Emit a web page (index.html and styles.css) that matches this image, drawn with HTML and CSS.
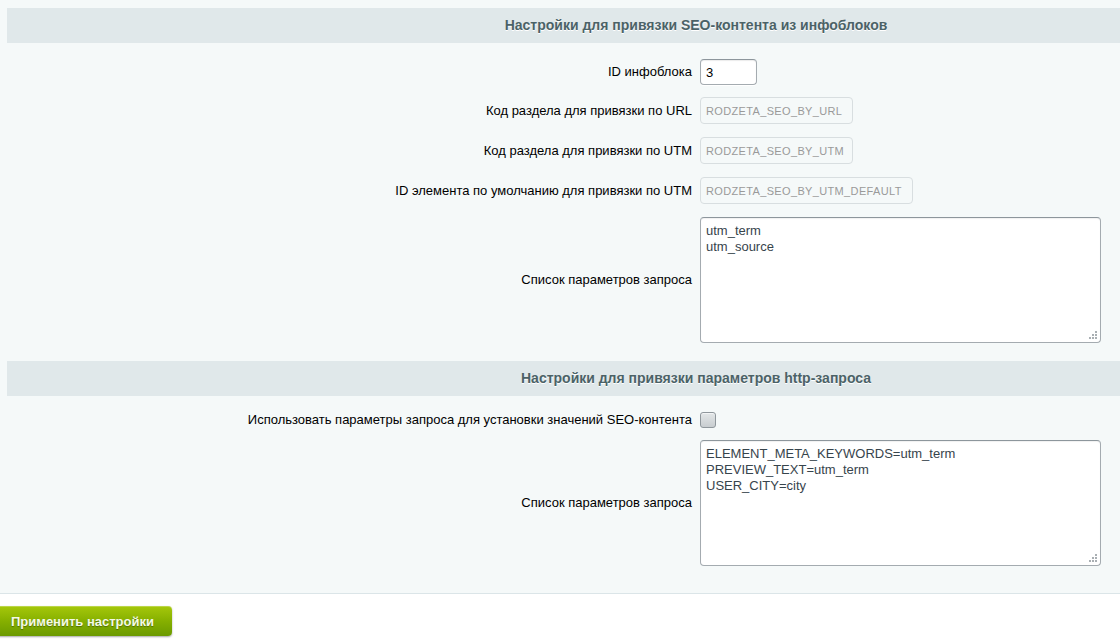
FILE: index.html
```html
<!DOCTYPE html>
<html lang="ru">
<head>
<meta charset="utf-8">
<title>Настройки</title>
<link rel="stylesheet" href="styles.css">
</head>
<body>
<div class="page">
  <div class="content">
    <div class="sheet">
      <section class="group">
        <div class="group-head">Настройки для привязки SEO-контента из инфоблоков</div>
        <div class="group-body">
          <div class="row row-first">
            <div class="label">ID инфоблока</div>
            <div class="field"><input class="text-input id-input" type="text" value="3"></div>
          </div>
          <div class="row">
            <div class="label">Код раздела для привязки по URL</div>
            <div class="field"><input class="text-input ro-input w-short" type="text" value="RODZETA_SEO_BY_URL" disabled></div>
          </div>
          <div class="row">
            <div class="label">Код раздела для привязки по UTM</div>
            <div class="field"><input class="text-input ro-input w-short" type="text" value="RODZETA_SEO_BY_UTM" disabled></div>
          </div>
          <div class="row">
            <div class="label">ID элемента по умолчанию для привязки по UTM</div>
            <div class="field"><input class="text-input ro-input w-long" type="text" value="RODZETA_SEO_BY_UTM_DEFAULT" disabled></div>
          </div>
          <div class="row">
            <div class="label">Список параметров запроса</div>
            <div class="field">
              <div class="ta-wrap">
                <textarea class="ta">utm_term
utm_source</textarea>
                <svg class="grip" width="8" height="8" viewBox="0 0 8 8" aria-hidden="true"><rect x="6" y="0" width="2" height="2"/><rect x="3" y="3" width="2" height="2"/><rect x="6" y="3" width="2" height="2"/><rect x="0" y="6" width="2" height="2"/><rect x="3" y="6" width="2" height="2"/><rect x="6" y="6" width="2" height="2"/></svg>
              </div>
            </div>
          </div>
        </div>
      </section>
      <section class="group group-last">
        <div class="group-head">Настройки для привязки параметров http-запроса</div>
        <div class="group-body">
          <div class="row row-check">
            <div class="label">Использовать параметры запроса для установки значений SEO-контента</div>
            <div class="field"><input class="check" type="checkbox"></div>
          </div>
          <div class="row">
            <div class="label">Список параметров запроса</div>
            <div class="field">
              <div class="ta-wrap">
                <textarea class="ta">ELEMENT_META_KEYWORDS=utm_term
PREVIEW_TEXT=utm_term
USER_CITY=city</textarea>
                <svg class="grip" width="8" height="8" viewBox="0 0 8 8" aria-hidden="true"><rect x="6" y="0" width="2" height="2"/><rect x="3" y="3" width="2" height="2"/><rect x="6" y="3" width="2" height="2"/><rect x="0" y="6" width="2" height="2"/><rect x="3" y="6" width="2" height="2"/><rect x="6" y="6" width="2" height="2"/></svg>
              </div>
            </div>
          </div>
        </div>
      </section>
    </div>
  </div>
  <div class="btns">
    <button class="btn-save" type="button">Применить настройки</button>
  </div>
</div>
</body>
</html>
```
FILE: styles.css
```css
html, body {
  margin: 0;
  padding: 0;
  overflow: hidden;
  background: #ffffff;
  font-family: "Liberation Sans", Arial, sans-serif;
  font-size: 13px;
  color: #000;
}

.page {
  width: 1120px;
  height: 642px;
  overflow: hidden;
}

.content {
  background: #f5f9f9;
  padding: 8px 0 0 7px;
  border-bottom: 1px solid #dbe5e8;
  overflow: hidden;
}

.sheet {
  width: 1378px;
}

.group-head {
  height: 35px;
  line-height: 35px;
  background: #e0e8ea;
  color: #4b6267;
  font-weight: bold;
  font-size: 14px;
  text-align: center;
  text-shadow: 0 1px #fff;
}

.group-body {
  padding: 10px 0 11px;
}

.group-last .group-body {
  padding: 11px 0 20px;
}

.row {
  display: flex;
  align-items: center;
  padding: 6px 0 7px;
}

.row-first {
  padding: 6px 0 6px;
}

.row-check {
  padding: 5px 0 6px;
}

.label {
  width: 685px;
  flex: none;
  padding-right: 4px;
  text-align: right;
  line-height: 16px;
}

.field {
  flex: 1;
  padding-left: 4px;
  display: flex;
  align-items: center;
}

.text-input {
  box-sizing: border-box;
  height: 27px;
  margin: 0;
  padding: 0 5px;
  border-radius: 4px;
  font-family: "Liberation Sans", Arial, sans-serif;
  font-size: 13px;
  outline: none;
}

.id-input {
  width: 57px;
  height: 26px;
  border: 1px solid #a4abb0;
  border-top-color: #8d969c;
  background: #fff;
  color: #000;
  box-shadow: inset 0 1px 1px rgba(0, 0, 0, 0.08), 0 1px 0 #fff;
}

.ro-input {
  border: 1px solid #d8dee0;
  background: #f5f9f9;
  color: #9a9a9a;
  -webkit-text-fill-color: #9a9a9a;
  opacity: 1;
  font-size: 11px;
  letter-spacing: 0.35px;
}

.w-short { width: 153px; }
.w-long { width: 213px; }

.ta-wrap {
  position: relative;
  width: 401px;
  height: 126px;
}

.ta {
  box-sizing: border-box;
  display: block;
  width: 401px;
  height: 126px;
  margin: 0;
  padding: 5px 5px;
  border: 1px solid #a4abb0;
  border-top-color: #8d969c;
  border-radius: 4px;
  background: #fff;
  color: #37444c;
  font-family: "Liberation Sans", Arial, sans-serif;
  font-size: 13px;
  line-height: 16px;
  resize: none;
  outline: none;
  box-shadow: inset 0 1px 1px rgba(0, 0, 0, 0.06);
}

.grip {
  position: absolute;
  right: 4px;
  bottom: 4px;
  fill: #a9afb3;
}

.check {
  -webkit-appearance: none;
  appearance: none;
  box-sizing: border-box;
  width: 16px;
  height: 16px;
  margin: 0;
  border: 1px solid #8f979c;
  border-radius: 3px;
  background: linear-gradient(#e3e7e8, #c8cdd0);
  box-shadow: inset 0 1px 0 #f2f4f5;
}

.btns {
  padding: 12px 0 0;
}

.btn-save {
  margin-left: -4px;
  height: 30px;
  padding: 0 18px 0 15px;
  border: none;
  border-radius: 4px;
  background: linear-gradient(#a6c80b, #86b000 50%, #6b9a00);
  box-shadow: 0 1px 2px rgba(0, 0, 0, 0.35), inset 0 1px 0 rgba(255, 255, 255, 0.25);
  color: #f4f9e6;
  font-family: "Liberation Sans", Arial, sans-serif;
  font-size: 13px;
  font-weight: bold;
  text-shadow: 0 1px 1px rgba(0, 0, 0, 0.35);
  cursor: pointer;
}
```
